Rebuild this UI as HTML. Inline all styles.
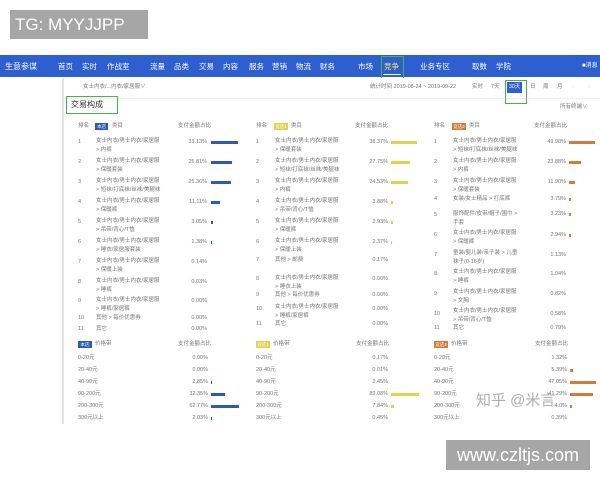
<!DOCTYPE html>
<html><head><meta charset="utf-8"><style>
*{margin:0;padding:0;box-sizing:border-box}
body{width:600px;height:480px;background:#fff;position:relative;overflow:hidden;font-family:"Liberation Sans","Noto Sans CJK SC",sans-serif;color:#666}
.a{position:absolute;white-space:nowrap;line-height:1}
.t{font-size:5.5px;color:#777}
.n{font-size:7.5px;color:#fff;top:63px}
.p{font-size:5.5px;color:#777;text-align:right;width:40px}
.b{position:absolute;height:3px}
.bl{background:#2a5bb8}.ye{background:#e2d34a}.or{background:#d67a3a}
.bd{position:absolute;height:7px;font-size:4.5px;color:#fff;text-align:center;line-height:7px}
</style></head><body>
<div class="a" style="left:10px;top:10px;width:138px;height:29px;background:#a6a6a6;color:#fff;font-size:17px;line-height:29px;padding-left:5px">TG: MYYJJPP</div>
<div class="a" style="left:0;top:55px;width:600px;height:22px;background:#2d5fd0"></div>
<div class="a n" style="left:5px;font-size:8px">生意参谋</div>
<div class="a n" style="left:58px">首页</div><div class="a n" style="left:82px">实时</div><div class="a n" style="left:107px">作战室</div>
<div class="a n" style="left:150px">流量</div><div class="a n" style="left:174px">品类</div><div class="a n" style="left:199px">交易</div><div class="a n" style="left:223px">内容</div><div class="a n" style="left:249px">服务</div><div class="a n" style="left:272px">营销</div><div class="a n" style="left:296px">物流</div><div class="a n" style="left:320px">财务</div>
<div class="a n" style="left:358px">市场</div><div class="a n" style="left:384px;color:#f5e66a">竞争</div><div class="a n" style="left:420px">业务专区</div><div class="a n" style="left:472px">取数</div><div class="a n" style="left:496px">学院</div><div class="a n" style="left:582px;font-size:6px">■消息</div>
<div class="a" style="left:381px;top:56px;width:23px;height:25px;border:1px solid #4caf50"></div>
<div class="a" style="left:383px;top:74px;width:18px;height:1px;background:#fff"></div>
<div class="a" style="left:62px;top:78px;width:538px;height:346px;border-left:2px solid #e4e4e4;background:#fff"></div>
<div class="a" style="left:64px;top:98px;width:536px;height:1px;background:#eee"></div>
<div class="a t" style="left:83px;top:85px">女士内衣/...内衣/家居服∨</div>
<div class="a t" style="left:370px;top:85px">统计时间 2019-08-24 ~ 2019-09-22</div>
<div class="a t" style="left:472px;top:85px">实时</div><div class="a t" style="left:491px;top:85px">7天</div>
<div class="a" style="left:507px;top:82px;width:15px;height:11px;background:#2d5fd0;color:#fff;font-size:5.5px;line-height:11px;text-align:center">30天</div>
<div class="a" style="left:505px;top:80px;width:22px;height:24px;border:1px solid #4caf50"></div>
<div class="a t" style="left:530px;top:85px">日</div><div class="a t" style="left:543px;top:85px">周</div><div class="a t" style="left:557px;top:85px">月</div><div class="a t" style="left:572px;top:85px;color:#ccc">‹</div><div class="a t" style="left:588px;top:85px;color:#ccc">›</div>
<div class="a" style="left:66px;top:96px;width:52px;height:18px;border:1px solid #4caf50"></div>
<div class="a" style="left:71px;top:101px;font-size:8px;color:#333">交易构成</div>
<div class="a t" style="left:560px;top:105px">所有终端∨</div>

<div class="a t" style="left:78px;top:124px">排名</div><div class="bd bl" style="left:95px;top:123px;width:13px">本店</div><div class="a t" style="left:112px;top:124px">类目</div><div class="a t" style="left:178px;top:124px">支付金额占比</div>
<div class="a t" style="left:256px;top:124px">排名</div><div class="bd ye" style="left:274px;top:123px;width:14px">竞店1</div><div class="a t" style="left:291px;top:124px">类目</div><div class="a t" style="left:355px;top:124px">支付金额占比</div>
<div class="a t" style="left:434px;top:124px">排名</div><div class="bd or" style="left:452px;top:123px;width:14px">竞店2</div><div class="a t" style="left:469px;top:124px">类目</div><div class="a t" style="left:534px;top:124px">支付金额占比</div>

<div class="a t" style="left:78px;top:140px">1</div><div class="a t" style="left:96px;top:137px;line-height:1.6">女士内衣/男士内衣/家居服<br>&gt; 内裤</div><div class="a p" style="left:167px;top:140px">33.13%</div><div class="b bl" style="left:211px;top:141px;width:27px"></div>
<div class="a t" style="left:78px;top:160px">2</div><div class="a t" style="left:96px;top:157px;line-height:1.6">女士内衣/男士内衣/家居服<br>&gt; 保暖套装</div><div class="a p" style="left:167px;top:160px">25.81%</div><div class="b bl" style="left:211px;top:161px;width:21px"></div>
<div class="a t" style="left:78px;top:180px">3</div><div class="a t" style="left:96px;top:177px;line-height:1.6">女士内衣/男士内衣/家居服<br>&gt; 短袜/打底袜/丝袜/美腿袜</div><div class="a p" style="left:167px;top:180px">25.36%</div><div class="b bl" style="left:211px;top:181px;width:20px"></div>
<div class="a t" style="left:78px;top:200px">4</div><div class="a t" style="left:96px;top:197px;line-height:1.6">女士内衣/男士内衣/家居服<br>&gt; 保暖裤</div><div class="a p" style="left:167px;top:200px">11.11%</div><div class="b bl" style="left:211px;top:201px;width:9px"></div>
<div class="a t" style="left:78px;top:220px">5</div><div class="a t" style="left:96px;top:217px;line-height:1.6">女士内衣/男士内衣/家居服<br>&gt; 吊带/背心/T恤</div><div class="a p" style="left:167px;top:220px">3.05%</div><div class="b bl" style="left:211px;top:221px;width:2px"></div>
<div class="a t" style="left:78px;top:240px">6</div><div class="a t" style="left:96px;top:237px;line-height:1.6">女士内衣/男士内衣/家居服<br>&gt; 睡衣/家居服套装</div><div class="a p" style="left:167px;top:240px">1.38%</div><div class="b bl" style="left:211px;top:241px;width:1px"></div>
<div class="a t" style="left:78px;top:260px">7</div><div class="a t" style="left:96px;top:257px;line-height:1.6">女士内衣/男士内衣/家居服<br>&gt; 保暖上装</div><div class="a p" style="left:167px;top:260px">0.14%</div>
<div class="a t" style="left:78px;top:280px">8</div><div class="a t" style="left:96px;top:277px;line-height:1.6">女士内衣/男士内衣/家居服<br>&gt; 睡裤</div><div class="a p" style="left:167px;top:280px">0.03%</div>
<div class="a t" style="left:78px;top:299px">9</div><div class="a t" style="left:96px;top:296px;line-height:1.6">女士内衣/男士内衣/家居服<br>&gt; 睡裤/家居裤</div><div class="a p" style="left:167px;top:299px">0.00%</div>
<div class="a t" style="left:78px;top:316px">10</div><div class="a t" style="left:96px;top:316px">其他 &gt; 每价优惠券</div><div class="a p" style="left:167px;top:316px">0.00%</div>
<div class="a t" style="left:78px;top:327px">11</div><div class="a t" style="left:96px;top:327px">其它</div><div class="a p" style="left:167px;top:327px">0.00%</div>

<div class="a t" style="left:256px;top:140px">1</div><div class="a t" style="left:275px;top:137px;line-height:1.6">女士内衣/男士内衣/家居服<br>&gt; 保暖套装</div><div class="a p" style="left:348px;top:140px">38.37%</div><div class="b ye" style="left:391px;top:141px;width:26px"></div>
<div class="a t" style="left:256px;top:160px">2</div><div class="a t" style="left:275px;top:157px;line-height:1.6">女士内衣/男士内衣/家居服<br>&gt; 短袜/打底袜/丝袜/美腿袜</div><div class="a p" style="left:348px;top:160px">27.75%</div><div class="b ye" style="left:391px;top:161px;width:19px"></div>
<div class="a t" style="left:256px;top:180px">3</div><div class="a t" style="left:275px;top:177px;line-height:1.6">女士内衣/男士内衣/家居服<br>&gt; 内裤</div><div class="a p" style="left:348px;top:180px">24.53%</div><div class="b ye" style="left:391px;top:181px;width:17px"></div>
<div class="a t" style="left:256px;top:200px">4</div><div class="a t" style="left:275px;top:197px;line-height:1.6">女士内衣/男士内衣/家居服<br>&gt; 吊带/背心/T恤</div><div class="a p" style="left:348px;top:200px">3.88%</div><div class="b ye" style="left:391px;top:201px;width:2px"></div>
<div class="a t" style="left:256px;top:220px">5</div><div class="a t" style="left:275px;top:217px;line-height:1.6">女士内衣/男士内衣/家居服<br>&gt; 保暖裤</div><div class="a p" style="left:348px;top:220px">2.93%</div><div class="b ye" style="left:391px;top:221px;width:2px"></div>
<div class="a t" style="left:256px;top:240px">6</div><div class="a t" style="left:275px;top:237px;line-height:1.6">女士内衣/男士内衣/家居服<br>&gt; 保暖上装</div><div class="a p" style="left:348px;top:240px">2.37%</div><div class="b ye" style="left:391px;top:241px;width:1px"></div>
<div class="a t" style="left:256px;top:258px">7</div><div class="a t" style="left:275px;top:258px">其他 &gt; 邮费</div><div class="a p" style="left:348px;top:258px">0.17%</div>
<div class="a t" style="left:256px;top:277px">8</div><div class="a t" style="left:275px;top:274px;line-height:1.6">女士内衣/男士内衣/家居服<br>&gt; 睡衣上装</div><div class="a p" style="left:348px;top:277px">0.00%</div>
<div class="a t" style="left:256px;top:293px">9</div><div class="a t" style="left:275px;top:293px">其他 &gt; 每价优惠券</div><div class="a p" style="left:348px;top:293px">0.00%</div>
<div class="a t" style="left:256px;top:307px">10</div><div class="a t" style="left:275px;top:303px;line-height:1.6">女士内衣/男士内衣/家居服<br>&gt; 睡裤/家居裤</div><div class="a p" style="left:348px;top:307px">0.00%</div>
<div class="a t" style="left:256px;top:322px">11</div><div class="a t" style="left:275px;top:322px">其它</div><div class="a p" style="left:348px;top:322px">0.00%</div>

<div class="a t" style="left:434px;top:140px">1</div><div class="a t" style="left:453px;top:137px;line-height:1.6">女士内衣/男士内衣/家居服<br>&gt; 短袜/打底袜/丝袜/美腿袜</div><div class="a p" style="left:526px;top:140px">49.90%</div><div class="b or" style="left:569px;top:141px;width:26px"></div>
<div class="a t" style="left:434px;top:160px">2</div><div class="a t" style="left:453px;top:157px;line-height:1.6">女士内衣/男士内衣/家居服<br>&gt; 内裤</div><div class="a p" style="left:526px;top:160px">23.88%</div><div class="b or" style="left:569px;top:161px;width:12px"></div>
<div class="a t" style="left:434px;top:180px">3</div><div class="a t" style="left:453px;top:177px;line-height:1.6">女士内衣/男士内衣/家居服<br>&gt; 保暖套装</div><div class="a p" style="left:526px;top:180px">11.90%</div><div class="b or" style="left:569px;top:181px;width:6px"></div>
<div class="a t" style="left:434px;top:197px">4</div><div class="a t" style="left:453px;top:197px">女装/女士精品 &gt; 打底裤</div><div class="a p" style="left:526px;top:197px">3.79%</div><div class="b or" style="left:569px;top:198px;width:2px"></div>
<div class="a t" style="left:434px;top:213px">5</div><div class="a t" style="left:453px;top:210px;line-height:1.6">服饰配件/皮带/帽子/围巾 &gt;<br>手套</div><div class="a p" style="left:526px;top:212px">3.23%</div><div class="b or" style="left:569px;top:213px;width:2px"></div>
<div class="a t" style="left:434px;top:233px">6</div><div class="a t" style="left:453px;top:229px;line-height:1.6">女士内衣/男士内衣/家居服<br>&gt; 保暖裤</div><div class="a p" style="left:526px;top:233px">2.94%</div><div class="b or" style="left:569px;top:234px;width:2px"></div>
<div class="a t" style="left:434px;top:253px">7</div><div class="a t" style="left:453px;top:249px;line-height:1.6">童装/婴儿装/亲子装 &gt; 儿童<br>袜子(0-16岁)</div><div class="a p" style="left:526px;top:253px">1.13%</div>
<div class="a t" style="left:434px;top:272px">8</div><div class="a t" style="left:453px;top:268px;line-height:1.6">女士内衣/男士内衣/家居服<br>&gt; 睡裤</div><div class="a p" style="left:526px;top:272px">1.04%</div>
<div class="a t" style="left:434px;top:292px">9</div><div class="a t" style="left:453px;top:288px;line-height:1.6">女士内衣/男士内衣/家居服<br>&gt; 文胸</div><div class="a p" style="left:526px;top:292px">0.82%</div>
<div class="a t" style="left:434px;top:312px">10</div><div class="a t" style="left:453px;top:307px;line-height:1.6">女士内衣/男士内衣/家居服<br>&gt; 吊带/背心/T恤</div><div class="a p" style="left:526px;top:312px">0.58%</div>
<div class="a t" style="left:434px;top:326px">11</div><div class="a t" style="left:453px;top:326px">其它</div><div class="a p" style="left:526px;top:326px">0.79%</div>

<div class="bd bl" style="left:78px;top:341px;width:14px">本店</div><div class="a t" style="left:95px;top:342px">价格带</div><div class="a t" style="left:178px;top:342px">支付金额占比</div>
<div class="bd ye" style="left:256px;top:341px;width:14px">竞店1</div><div class="a t" style="left:273px;top:342px">价格带</div><div class="a t" style="left:356px;top:342px">支付金额占比</div>
<div class="bd or" style="left:434px;top:341px;width:14px">竞店2</div><div class="a t" style="left:451px;top:342px">价格带</div><div class="a t" style="left:535px;top:342px">支付金额占比</div>

<div class="a t" style="left:78px;top:356px">0-20元</div><div class="a p" style="left:168px;top:356px">0.00%</div>
<div class="a t" style="left:78px;top:368px">20-40元</div><div class="a p" style="left:168px;top:368px">0.00%</div>
<div class="a t" style="left:78px;top:380px">40-90元</div><div class="a p" style="left:168px;top:380px">2.85%</div><div class="b bl" style="left:211px;top:381px;width:1px"></div>
<div class="a t" style="left:78px;top:392px">90-200元</div><div class="a p" style="left:168px;top:392px">32.35%</div><div class="b bl" style="left:211px;top:393px;width:14px"></div>
<div class="a t" style="left:78px;top:404px">200-300元</div><div class="a p" style="left:168px;top:404px">62.77%</div><div class="b bl" style="left:211px;top:405px;width:28px"></div>
<div class="a t" style="left:78px;top:416px">300元以上</div><div class="a p" style="left:168px;top:416px">2.03%</div><div class="b bl" style="left:211px;top:417px;width:1px"></div>

<div class="a t" style="left:256px;top:356px">0-20元</div><div class="a p" style="left:348px;top:356px">0.17%</div>
<div class="a t" style="left:256px;top:368px">20-40元</div><div class="a p" style="left:348px;top:368px">0.01%</div>
<div class="a t" style="left:256px;top:380px">40-90元</div><div class="a p" style="left:348px;top:380px">2.45%</div>
<div class="a t" style="left:256px;top:392px">90-200元</div><div class="a p" style="left:348px;top:392px">89.08%</div><div class="b ye" style="left:391px;top:393px;width:28px"></div>
<div class="a t" style="left:256px;top:404px">200-300元</div><div class="a p" style="left:348px;top:404px">7.84%</div><div class="b ye" style="left:391px;top:405px;width:3px"></div>
<div class="a t" style="left:256px;top:416px">300元以上</div><div class="a p" style="left:348px;top:416px">0.45%</div>

<div class="a t" style="left:434px;top:356px">0-20元</div><div class="a p" style="left:527px;top:356px">1.32%</div>
<div class="a t" style="left:434px;top:368px">20-40元</div><div class="a p" style="left:527px;top:368px">5.39%</div><div class="b or" style="left:570px;top:369px;width:3px"></div>
<div class="a t" style="left:434px;top:380px">40-90元</div><div class="a p" style="left:527px;top:380px">47.05%</div><div class="b or" style="left:570px;top:381px;width:26px"></div>
<div class="a t" style="left:434px;top:392px">90-200元</div><div class="a p" style="left:527px;top:392px">41.29%</div><div class="b or" style="left:570px;top:393px;width:23px"></div>
<div class="a t" style="left:434px;top:404px">200-300元</div><div class="a p" style="left:527px;top:404px">4.0%</div><div class="b or" style="left:570px;top:405px;width:2px"></div>
<div class="a t" style="left:434px;top:416px">300元以上</div><div class="a p" style="left:527px;top:416px">0.39%</div>

<div class="a" style="left:476px;top:393px;font-size:15px;color:rgba(150,150,150,.75)">知乎 @米言</div>
<div class="a" style="left:446px;top:440px;width:144px;height:30px;background:#a6a6a6;color:#fff;font-size:18px;line-height:30px;text-align:center">www.czltjs.com</div>
</body></html>
